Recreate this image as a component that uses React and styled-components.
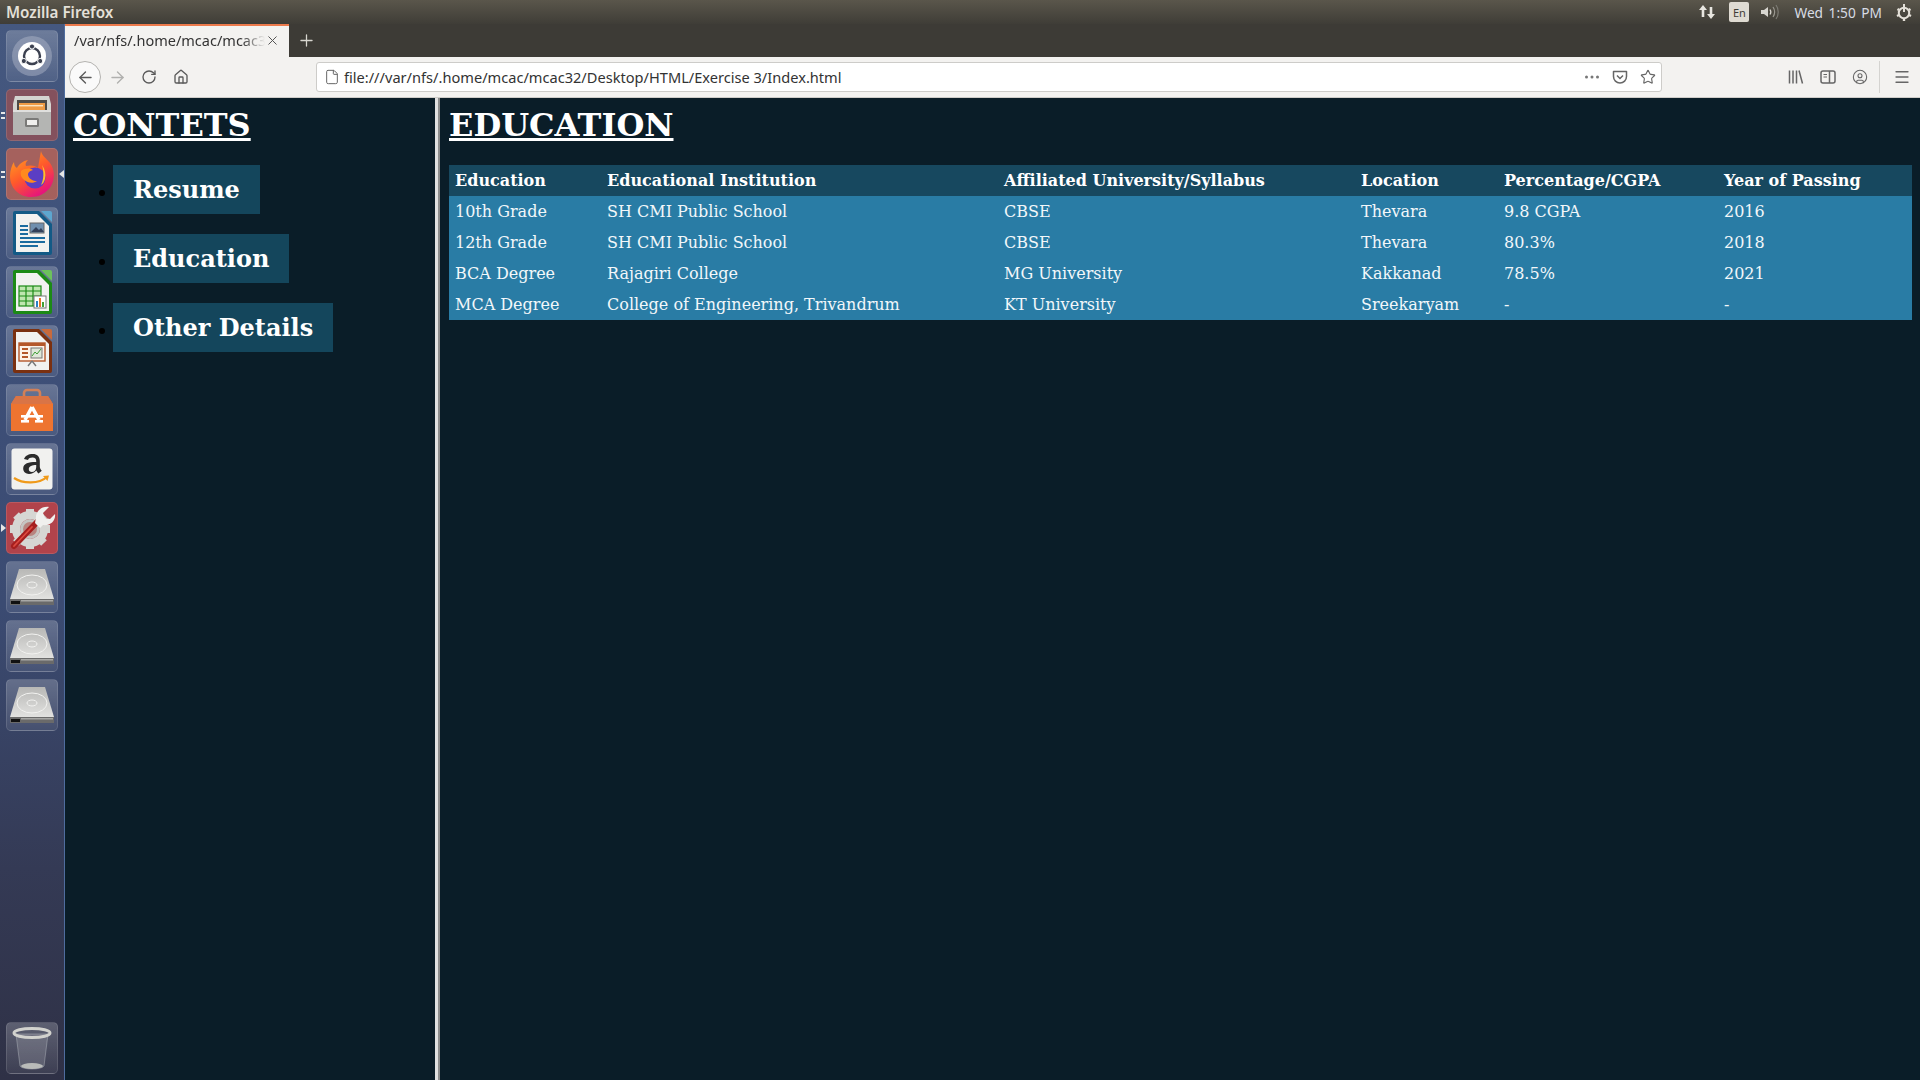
import React from "react";
import styled, { createGlobalStyle } from "styled-components";
import {
  ArrowLeft,
  ArrowRight,
  RotateCw,
  Home,
  File,
  Star,
  Plus,
  X,
  Menu,
  CircleUser,
} from "lucide-react";

const GlobalStyle = createGlobalStyle`
  html, body {
    margin: 0;
    padding: 0;
    height: 100%;
    overflow: hidden;
    background: #0a1d28;
  }
`;

const Desktop = styled.div`
  width: 1920px;
  height: 1080px;
  display: flex;
  flex-direction: column;
  overflow: hidden;
  font-family: "Noto Sans", "Open Sans", sans-serif;
`;

const TopPanel = styled.header`
  height: 24px;
  flex: none;
  display: flex;
  align-items: center;
  justify-content: space-between;
  padding: 0 7px 0 6px;
  background: linear-gradient(#5a564b, #3f3d37);
  color: #e4e0d8;
`;

const AppName = styled.span`
  font-size: 15.2px;
  font-weight: 600;
`;

const Tray = styled.div`
  display: flex;
  align-items: center;
`;

const LangBadge = styled.span`
  width: 20px;
  height: 20px;
  margin: 0 10px 0 13px;
  display: flex;
  align-items: center;
  justify-content: center;
  border-radius: 2px;
  background: #dfdbd2;
  color: #3f3d37;
  font-size: 11px;
`;

const Clock = styled.span`
  font-size: 13.7px;
  margin: 0 13px 0 13px;
  word-spacing: 2px;
  color: #d8dce4;
`;

const Body = styled.div`
  flex: 1;
  min-height: 0;
  display: flex;
`;

const Launcher = styled.nav`
  width: 65px;
  flex: none;
  display: flex;
  flex-direction: column;
  gap: 7px;
  padding: 6px 0 6px 6px;
  box-sizing: border-box;
  background: linear-gradient(#45587f 0%, #3e5079 28%, #3b4b72 55%, #343a55 80%, #2f3146 100%);
  border-right: 1px solid #4f6d9e;
`;

const Tile = styled.div`
  position: relative;
  width: 52px;
  height: 52px;
  flex: none;
  display: flex;
  align-items: center;
  justify-content: center;
  border-radius: 5px;
  box-sizing: border-box;
  border: 1px solid rgba(255, 255, 255, 0.12);
  background: ${(p) => p.$bg || "linear-gradient(rgba(255,255,255,0.22), rgba(255,255,255,0.07))"};
  ${(p) => p.$last && "margin-top: auto;"}
`;

const Pip = styled.span`
  position: absolute;
  left: -6px;
  top: 50%;
  width: 4px;
  height: 7px;
  margin-top: -3px;
  border-top: 2px solid #e8e8e8;
  border-bottom: 2px solid #e8e8e8;
  box-sizing: border-box;
`;

const ActiveArrow = styled.span`
  position: absolute;
  right: -7px;
  top: 50%;
  margin-top: -4px;
  border: 4px solid transparent;
  border-right: 5px solid #e6e6e6;
  border-left: 0;
`;

const RunArrow = styled.span`
  position: absolute;
  left: -6px;
  top: 50%;
  margin-top: -4px;
  border: 4px solid transparent;
  border-left: 5px solid #e6e6e6;
  border-right: 0;
`;

const Browser = styled.div`
  flex: 1;
  min-width: 0;
  display: flex;
  flex-direction: column;
`;

const TabBar = styled.div`
  height: 33px;
  flex: none;
  display: flex;
  align-items: stretch;
  background: #3d3b36;
`;

const Tab = styled.div`
  width: 224px;
  box-sizing: border-box;
  display: flex;
  align-items: center;
  padding: 0 9px 3px 9px;
  background: #f3f2f0;
  border-top: 2px solid #ec7a4c;
  color: #333;
  font-size: 14.5px;
`;

const TabTitle = styled.span`
  flex: 1;
  white-space: nowrap;
  overflow: hidden;
  -webkit-mask-image: linear-gradient(to right, #000 88%, transparent);
  mask-image: linear-gradient(to right, #000 88%, transparent);
`;

const NewTab = styled.div`
  width: 34px;
  display: flex;
  align-items: center;
  justify-content: center;
  color: #d8d6d0;
`;

const NavBar = styled.div`
  height: 41px;
  flex: none;
  display: flex;
  align-items: center;
  box-sizing: border-box;
  padding: 0 0 0 4px;
  background: #f3f2f0;
  border-bottom: 1px solid #cfcdc9;
  color: #5a5a5a;
`;

const BackButton = styled.div`
  width: 32px;
  height: 32px;
  flex: none;
  display: flex;
  align-items: center;
  justify-content: center;
  border-radius: 50%;
  box-sizing: border-box;
  border: 1px solid #b4b3b0;
  background: #fafafa;
`;

const NavButton = styled.div`
  width: 32px;
  height: 32px;
  flex: none;
  display: flex;
  align-items: center;
  justify-content: center;
  color: ${(p) => (p.$off ? "#b0b0ae" : "#5a5a5a")};
`;

const UrlBar = styled.div`
  width: 1346px;
  height: 30px;
  margin-left: 119px;
  flex: none;
  display: flex;
  align-items: center;
  box-sizing: border-box;
  padding: 0 5px 0 7px;
  gap: 12px;
  background: #fff;
  border: 1px solid #cdccc9;
  border-radius: 3px;
`;

const UrlText = styled.span`
  flex: 1;
  margin-left: -8px;
  font-size: 14.6px;
  color: #333;
  white-space: nowrap;
`;

const ToolGroup = styled.div`
  display: flex;
  align-items: center;
  gap: 16px;
  margin-left: 126px;
`;

const ToolDivider = styled.span`
  width: 1px;
  height: 32px;
  margin: 0 -3px 0 -5px;
  background: #d4d3d0;
`;

const Page = styled.main`
  flex: 1;
  min-height: 0;
  display: flex;
  background: #0a1d28;
  color: #fff;
  font-family: "DejaVu Serif", serif;
`;

const Sidebar = styled.aside`
  width: 370px;
  flex: none;
  box-sizing: border-box;
  padding: 8px;
`;

const Content = styled.section`
  flex: 1;
  min-width: 0;
  box-sizing: border-box;
  padding: 8px 8px 8px 9px;
  border-left: 5px ridge #e0e0e0;
`;

const Heading = styled.h1`
  margin: 0;
  font-size: 32px;
  line-height: 38px;
  font-weight: 700;
  text-decoration: underline;
`;

const Links = styled.ul`
  margin: 21px 0 0;
  padding: 0 0 0 40px;
  list-style: none;
`;

const LinkRow = styled.li`
  position: relative;
  margin-bottom: 20px;
  height: 49px;

  &::before {
    content: "";
    position: absolute;
    left: -14px;
    top: 25px;
    width: 6px;
    height: 6px;
    border-radius: 50%;
    background: #000;
  }
`;

const LinkButton = styled.a`
  display: inline-block;
  height: 49px;
  line-height: 50px;
  padding: 0 20px;
  box-sizing: border-box;
  background: #14465c;
  color: #fff;
  font-size: 24px;
  font-weight: 700;
  text-decoration: none;
`;

const Table = styled.table`
  margin-top: 21px;
  width: 1463px;
  table-layout: fixed;
  border-collapse: collapse;
  font-size: 16px;
  line-height: 19px;
  background: #297ca5;
`;

const Column = styled.col`
  width: ${(p) => p.$w}px;
`;

const HeadCell = styled.th`
  padding: 6px;
  text-align: left;
  font-weight: 700;
  white-space: nowrap;
  background: #17485f;
`;

const Cell = styled.td`
  padding: 6px;
  white-space: nowrap;
  color: #f2f7fa;
`;

const columns = [152, 397, 357, 143, 220, 194];
const headings = [
  "Education",
  "Educational Institution",
  "Affiliated University/Syllabus",
  "Location",
  "Percentage/CGPA",
  "Year of Passing",
];
const rows = [
  ["10th Grade", "SH CMI Public School", "CBSE", "Thevara", "9.8 CGPA", "2016"],
  ["12th Grade", "SH CMI Public School", "CBSE", "Thevara", "80.3%", "2018"],
  ["BCA Degree", "Rajagiri College", "MG University", "Kakkanad", "78.5%", "2021"],
  ["MCA Degree", "College of Engineering, Trivandrum", "KT University", "Sreekaryam", "-", "-"],
];

function UbuntuIcon() {
  return (
    <svg width="44" height="44" viewBox="0 0 44 44">
      <circle cx="22" cy="22" r="20" fill="#b4bacd" opacity="0.45" />
      <circle cx="22" cy="22" r="14" fill="#fff" />
      <circle cx="22" cy="22" r="8" fill="none" stroke="#3c4150" strokeWidth="2.4" />
      <circle cx="22" cy="12.500" r="2.600" fill="#3c4150" stroke="#fff" />
      <circle cx="13.800" cy="27" r="2.600" fill="#3c4150" stroke="#fff" />
      <circle cx="30.200" cy="27" r="2.600" fill="#3c4150" stroke="#fff" />
    </svg>
  );
}

function FilesIcon() {
  return (
    <svg width="44" height="44" viewBox="0 0 44 44">
      <path d="M5 3h34l2 8v30H3V11z" fill="#d4d4d0" />
      <rect x="7" y="7" width="30" height="13" fill="#4e4a46" />
      <rect x="9" y="10" width="26" height="7" fill="#ef9b45" />
      <rect x="9" y="12" width="24" height="1.4" fill="#fbe3c0" />
      <rect x="3" y="17" width="38" height="25" fill="#b4b5b3" />
      <rect x="3" y="17" width="38" height="2" fill="#dfdfdd" />
      <rect x="15" y="25" width="14" height="9" rx="1.5" fill="#7a7a78" />
      <rect x="17" y="27" width="10" height="5" fill="#efefed" />
    </svg>
  );
}

function FirefoxIcon() {
  return (
    <svg width="48" height="50" viewBox="0 0 48 50">
      <defs>
        <linearGradient id="foxBody" x1="0" y1="0" x2="0.6" y2="1">
          <stop offset="0" stopColor="#ffb01f" />
          <stop offset="0.55" stopColor="#ff5a2a" />
          <stop offset="1" stopColor="#e6147c" />
        </linearGradient>
      </defs>
      <path
        d="M33 2c1 5 5 7 9 12 5 7 5 16 1 23-5 8-13 11-20 11C11 48 2 39 2 27c0-6 2-11 4-14 0 3 1 5 3 6 2-4 6-7 11-8-2 2-3 4-2 6 4-1 9-1 12 2 1-6 2-12 3-17z"
        fill="url(#foxBody)"
      />
      <circle cx="27" cy="29" r="10.5" fill="#5b3ec4" />
      <path d="M13 22c4-3 9-3 12-1-4 1-5 3-5 5 1 4 5 6 9 6-4 3-10 2-14-2-2-2-3-5-2-8z" fill="#ff8a1f" />
      <path d="M34 16c3 4 4 9 3 14-1 3-2 5-4 6 3-6 3-13 1-20z" fill="#ffc02a" />
    </svg>
  );
}

function DocIcon({ frame, corner, children }) {
  return (
    <svg width="42" height="46" viewBox="0 0 42 46">
      <path d="M2 3a2 2 0 0 1 2-2h24l13 13v29a2 2 0 0 1-2 2H4a2 2 0 0 1-2-2z" fill={frame} />
      <path d="M5 4h21l12 12v26H5z" fill="#f2f2f0" />
      <path d="M30 1h9a2 2 0 0 1 2 2v9z" fill={corner} />
      {children}
    </svg>
  );
}

function WriterIcon() {
  return (
    <DocIcon frame="#135a86" corner="#5da6cf">
      <rect x="9" y="15" width="8" height="2" fill="#1b6b9f" />
      <rect x="9" y="19" width="8" height="2" fill="#1b6b9f" />
      <rect x="9" y="23" width="8" height="2" fill="#1b6b9f" />
      <rect x="19" y="13" width="14" height="10" fill="#6f8fae" stroke="#666" />
      <path d="M20 22l5-5 3 3 2-2 3 4z" fill="#33405a" />
      <rect x="9" y="27" width="25" height="2" fill="#1b6b9f" />
      <rect x="9" y="31" width="25" height="2" fill="#1b6b9f" />
      <rect x="9" y="35" width="18" height="2" fill="#1b6b9f" />
    </DocIcon>
  );
}

function CalcIcon() {
  return (
    <DocIcon frame="#1c8a16" corner="#6cc15c">
      <rect x="8" y="17" width="22" height="20" fill="#bfe6b0" stroke="#1c8a16" strokeWidth="1.2" />
      <path d="M8 22h22M8 27h22M8 32h22M15 17v20M22 17v20" stroke="#1c8a16" strokeWidth="1.2" />
      <rect x="23" y="27" width="12" height="12" fill="#fff" stroke="#777" />
      <rect x="25" y="32" width="2" height="6" fill="#2a7fc4" />
      <rect x="28" y="29" width="2" height="9" fill="#e6762b" />
      <rect x="31" y="33" width="2" height="5" fill="#3f9f35" />
    </DocIcon>
  );
}

function ImpressIcon() {
  return (
    <DocIcon frame="#7a3010" corner="#c86a3c">
      <rect x="8" y="15" width="26" height="18" fill="#fdf2e8" stroke="#b4572a" strokeWidth="1.4" />
      <rect x="8" y="15" width="26" height="3" fill="#b4572a" />
      <path d="M11 21h6M11 25h6M11 29h6" stroke="#b4572a" strokeWidth="2" />
      <rect x="20" y="20" width="11" height="10" fill="#dfe6d8" stroke="#777" />
      <path d="M21 28l3-4 2 2 4-5" stroke="#3f9f35" fill="none" />
      <path d="M21 33l-4 5M21 33l4 5" stroke="#777" strokeWidth="1.4" />
    </DocIcon>
  );
}

function StoreIcon() {
  return (
    <svg width="44" height="46" viewBox="0 0 44 46">
      <path d="M14 14V6a3 3 0 0 1 3-3h10a3 3 0 0 1 3 3v8" fill="none" stroke="#d28058" strokeWidth="2.6" />
      <path d="M6 9h32l5 8v27H1V17z" fill="#ee7430" />
      <path d="M6 9h32l5 8H1z" fill="#d97446" />
      <path d="M22 20l-7 13M22 20l7 13" stroke="#fff" strokeWidth="3.600" fill="none" />
      <rect x="11" y="28" width="22" height="2.600" fill="#fff" />
      <rect x="11" y="33" width="8" height="2.600" fill="#fff" />
      <rect x="25" y="33" width="8" height="2.600" fill="#fff" />
    </svg>
  );
}

function AmazonIcon() {
  return (
    <svg width="42" height="42" viewBox="0 0 42 42">
      <rect x="0.5" y="0.5" width="41" height="41" rx="3" fill="#f1f1ef" />
      <path
        d="M22 6c-5 0-8 2-9 5l4 1c.6-1.600 2.400-2.400 4.500-2.400 2.700 0 3.700 1.300 3.700 3.400v1c-7-.1-13 1.200-13 6.600 0 3.500 2.600 5.400 5.800 5.400 3 0 5.300-1.300 7.300-3.500.6 1.200 1.400 2.300 2.200 3l3.300-2.800c-.9-1.200-2-2.300-2-4.300V13c0-4.500-3-7-6.800-7zm3.200 11v2.200c0 2.800-2 4.800-4.400 4.800-1.800 0-3-1-3-2.800 0-3.200 3.600-4.200 7.400-4.200z"
        fill="#2b2b2b"
      />
      <path d="M3 30c9 6 25 6 33-1" stroke="#f09a1a" strokeWidth="2.200" fill="none" />
      <path d="M32 28l6-.5-1.500 5.500z" fill="#f09a1a" />
    </svg>
  );
}

function SettingsIcon() {
  return (
    <svg width="48" height="48" viewBox="0 0 48 48">
      <circle cx="22" cy="25" r="14" fill="none" stroke="#d6d6d3" strokeWidth="8" />
      <path
        d="M22 5v40M2 25h40M8 11l28 28M36 11L8 39"
        stroke="#d6d6d3"
        strokeWidth="8"
        strokeDasharray="5 30"
      />
      <circle cx="22" cy="25" r="10" fill="#c5c5c2" />
      <circle cx="22" cy="25" r="7" fill="#b8847f" />
      <path d="M6 42L32 15" stroke="#a61f1f" strokeWidth="6" strokeLinecap="round" />
      <path d="M6 42L24 23" stroke="#dd4a40" strokeWidth="1.800" strokeLinecap="round" />
      <path d="M28 13c0-6 6-11 13-10l-6 6 2 5 5 1 5-5c1 7-5 12-12 11l-3 3-5-5z" fill="#f0f0ee" />
    </svg>
  );
}

function DriveIcon() {
  return (
    <svg width="46" height="40" viewBox="0 0 46 40">
      <defs>
        <linearGradient id="driveTop" x1="0" y1="0" x2="0" y2="1">
          <stop offset="0" stopColor="#b8b8b6" />
          <stop offset="1" stopColor="#e2e2e0" />
        </linearGradient>
      </defs>
      <path d="M10 2h26l9 30H1z" fill="url(#driveTop)" />
      <ellipse cx="23" cy="18" rx="15" ry="10" fill="none" stroke="#f2f2f0" strokeWidth="1" />
      <ellipse cx="23" cy="18" rx="5" ry="3" fill="none" stroke="#f2f2f0" strokeWidth="1" />
      <rect x="1" y="32" width="44" height="6" fill="#6a6a6a" />
      <rect x="2" y="34" width="9" height="3" fill="#111" />
      <rect x="12" y="33" width="32" height="1.500" fill="#a8a8a6" />
    </svg>
  );
}

function TrashIcon() {
  return (
    <svg width="40" height="46" viewBox="0 0 40 46">
      <path d="M4 9l4 32c2 4 22 4 24 0l4-32z" fill="#ffffff" fillOpacity="0.14" stroke="#c4c8cc" strokeOpacity="0.4" />
      <ellipse cx="20" cy="41" rx="11" ry="3" fill="#b9bbb9" />
      <ellipse cx="20" cy="8" rx="18" ry="4.500" fill="none" stroke="#d2d2ce" strokeWidth="3" />
    </svg>
  );
}

function TransferIcon() {
  return (
    <svg width="18" height="18" viewBox="0 0 18 18" fill="#e8e6e0">
      <path d="M5 2L1 7h2.700v7h2.600V7H9z" />
      <path d="M13 16l4-5h-2.700V4h-2.600v7H9z" />
    </svg>
  );
}

function VolumeIcon() {
  return (
    <svg width="22" height="18" viewBox="0 0 22 18" fill="none">
      <path d="M2 7h3l4-3v10l-4-3H2z" fill="#d8d6d0" />
      <path d="M11 6.500c1 1.500 1 3.500 0 5" stroke="#d8d6d0" strokeWidth="1.300" />
      <path d="M14 4c2 3 2 7 0 10" stroke="#9a9890" strokeWidth="1.200" />
      <path d="M17 2c3 4 3 10 0 14" stroke="#7d7b74" strokeWidth="1.200" />
    </svg>
  );
}

function SessionIcon() {
  return (
    <svg width="18" height="18" viewBox="0 0 18 18" fill="none" stroke="#e4e0d8">
      <circle cx="9" cy="10" r="5.200" strokeWidth="2" />
      <path d="M9 1v8" strokeWidth="2" />
      <path d="M2.500 6l1.500 1M15.500 6l-1.500 1M2 13l2-1M16 13l-2-1M9 16v2" strokeWidth="2.400" />
    </svg>
  );
}

function PocketIcon() {
  return (
    <svg width="16" height="16" viewBox="0 0 16 16" fill="none" stroke="#666" strokeWidth="1.500">
      <path d="M1.500 2.500h13v5a6.500 6.500 0 0 1-13 0z" strokeLinejoin="round" />
      <path d="M5 6.500l3 3 3-3" />
    </svg>
  );
}

function LibraryIcon() {
  return (
    <svg width="16" height="16" viewBox="0 0 16 16" fill="none" stroke="#666" strokeWidth="1.500">
      <path d="M1.500 1.500v13M5 1.500v13M8.500 1.500v13M11 1.500l3.500 13" />
    </svg>
  );
}

function SidebarIcon() {
  return (
    <svg width="16" height="16" viewBox="0 0 16 16" fill="none" stroke="#666" strokeWidth="1.500">
      <rect x="1" y="2" width="14" height="12" rx="2" />
      <path d="M9.500 2v12" />
      <path d="M3.500 5.500h3.500M3.500 8h3.500" strokeWidth="1" />
    </svg>
  );
}

function DotsIcon() {
  return (
    <svg width="16" height="16" viewBox="0 0 16 16" fill="#777">
      <circle cx="2.500" cy="8" r="1.500" />
      <circle cx="8" cy="8" r="1.500" />
      <circle cx="13.500" cy="8" r="1.500" />
    </svg>
  );
}

export default function App() {
  return (
    <Desktop>
      <GlobalStyle />
      <TopPanel>
        <AppName>Mozilla Firefox</AppName>
        <Tray>
          <TransferIcon />
          <LangBadge>En</LangBadge>
          <VolumeIcon />
          <Clock>Wed 1:50 PM</Clock>
          <SessionIcon />
        </Tray>
      </TopPanel>
      <Body>
        <Launcher>
          <Tile>
            <UbuntuIcon />
          </Tile>
          <Tile $bg="rgba(160, 80, 80, 0.7)">
            <Pip />
            <FilesIcon />
          </Tile>
          <Tile $bg="rgba(190, 100, 85, 0.8)">
            <Pip />
            <ActiveArrow />
            <FirefoxIcon />
          </Tile>
          <Tile>
            <WriterIcon />
          </Tile>
          <Tile>
            <CalcIcon />
          </Tile>
          <Tile>
            <ImpressIcon />
          </Tile>
          <Tile>
            <StoreIcon />
          </Tile>
          <Tile>
            <AmazonIcon />
          </Tile>
          <Tile $bg="#b1434b">
            <RunArrow />
            <SettingsIcon />
          </Tile>
          <Tile>
            <DriveIcon />
          </Tile>
          <Tile>
            <DriveIcon />
          </Tile>
          <Tile>
            <DriveIcon />
          </Tile>
          <Tile $last>
            <TrashIcon />
          </Tile>
        </Launcher>
        <Browser>
          <TabBar>
            <Tab>
              <TabTitle>/var/nfs/.home/mcac/mcac32/Desktop</TabTitle>
              <X size={15} strokeWidth={1.6} color="#555" />
            </Tab>
            <NewTab>
              <Plus size={19} strokeWidth={1.6} />
            </NewTab>
          </TabBar>
          <NavBar>
            <BackButton>
              <ArrowLeft size={19} strokeWidth={1.7} />
            </BackButton>
            <NavButton $off>
              <ArrowRight size={19} strokeWidth={1.7} />
            </NavButton>
            <NavButton>
              <RotateCw size={16} strokeWidth={2} />
            </NavButton>
            <NavButton>
              <Home size={16} strokeWidth={2} />
            </NavButton>
            <UrlBar>
              <File size={16} strokeWidth={1.5} color="#666" />
              <UrlText>file:///var/nfs/.home/mcac/mcac32/Desktop/HTML/Exercise 3/Index.html</UrlText>
              <DotsIcon />
              <PocketIcon />
              <Star size={16} strokeWidth={1.7} color="#666" />
            </UrlBar>
            <ToolGroup>
              <LibraryIcon />
              <SidebarIcon />
              <CircleUser size={16} strokeWidth={1.6} color="#666" />
              <ToolDivider />
              <Menu size={18} strokeWidth={1.7} color="#666" />
            </ToolGroup>
          </NavBar>
          <Page>
            <Sidebar>
              <Heading>CONTETS</Heading>
              <Links>
                <LinkRow>
                  <LinkButton href="#resume">Resume</LinkButton>
                </LinkRow>
                <LinkRow>
                  <LinkButton href="#education">Education</LinkButton>
                </LinkRow>
                <LinkRow>
                  <LinkButton href="#other">Other Details</LinkButton>
                </LinkRow>
              </Links>
            </Sidebar>
            <Content>
              <Heading>EDUCATION</Heading>
              <Table>
                <colgroup>
                  {columns.map((w, i) => (
                    <Column key={i} $w={w} />
                  ))}
                </colgroup>
                <thead>
                  <tr>
                    {headings.map((h) => (
                      <HeadCell key={h}>{h}</HeadCell>
                    ))}
                  </tr>
                </thead>
                <tbody>
                  {rows.map((row) => (
                    <tr key={row[0]}>
                      {row.map((c, i) => (
                        <Cell key={i}>{c}</Cell>
                      ))}
                    </tr>
                  ))}
                </tbody>
              </Table>
            </Content>
          </Page>
        </Browser>
      </Body>
    </Desktop>
  );
}
